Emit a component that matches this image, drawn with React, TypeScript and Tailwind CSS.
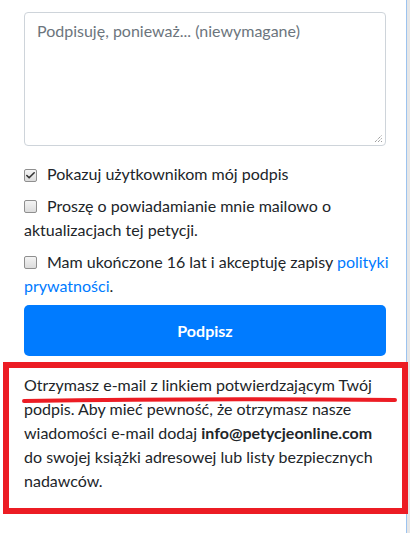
import { Check } from 'lucide-react';

const Box = ({ checked }: { checked?: boolean }) => (
  <span className="relative inline-flex w-[13px] h-[13px] flex-shrink-0 rounded-[2px] border border-[#8f8f8f] bg-gradient-to-b from-[#f4f4f4] to-[#dcdcdc] items-center justify-center mr-[10px] align-[-1px]">
    {checked && <Check className="w-[11px] h-[11px] text-[#333]" strokeWidth={3.5} />}
  </span>
);

const App = () => {
  return (
    <div className="relative w-[410px] h-[533px] bg-white overflow-hidden text-[16px] leading-6 text-[#212529]" style={{ fontFamily: '"Segoe UI", Lato, "Noto Sans", sans-serif' }}>
      {/* window edge */}
      <div className="absolute top-0 right-0 h-full w-[4px] border-l border-[#9cc3ef] bg-[#e6e6e6]" />

      <div className="px-6 pt-3">
        <div className="relative h-[134px] rounded-[4px] border border-[#ced4da] px-3 py-[6px] text-[#6c757d]">
          Podpisuję, ponieważ... (niewymagane)
          <svg className="absolute right-[2px] bottom-[2px]" width="9" height="9" viewBox="0 0 9 9">
            <path d="M1 8 L8 1 M4 8 L8 4 M7 8 L8 7" stroke="#777" strokeWidth="1" strokeDasharray="1 1" />
          </svg>
        </div>

        <div className="mt-4 space-y-2 whitespace-nowrap">
          <div><Box checked />Pokazuj użytkownikom mój podpis</div>
          <div><Box />Proszę o powiadamianie mnie mailowo o<br />aktualizacjach tej petycji.</div>
          <div><Box />Mam ukończone 16 lat i akceptuję zapisy <a className="text-[#007bff]">polityki<br />prywatności</a>.</div>
        </div>

        <button className="mt-[7px] w-full h-[51px] rounded-[5px] bg-[#007bff] text-white font-bold">Podpisz</button>
      </div>

      <div className="relative z-10 mt-[6px] ml-[3px] w-[405px] h-[152px] border-[6px] border-[#ec1c24] pl-[15px] pt-[5px]">
        <p>
          Otrzymasz e-mail z linkiem potwierdzającym Twój<br />
          podpis. Aby mieć pewność, że otrzymasz nasze<br />
          wiadomości e-mail dodaj <b>info@petycjeonline.com</b><br />
          do swojej książki adresowej lub listy bezpiecznych<br />
          nadawców.
        </p>
        <svg className="absolute left-[13px] top-[27px]" width="376" height="10" viewBox="0 0 376 10">
          <path d="M2 6 Q 180 3 373 5" stroke="#ec1c24" strokeWidth="4" strokeLinecap="round" fill="none" />
        </svg>
      </div>
    </div>
  );
};

export default App;
